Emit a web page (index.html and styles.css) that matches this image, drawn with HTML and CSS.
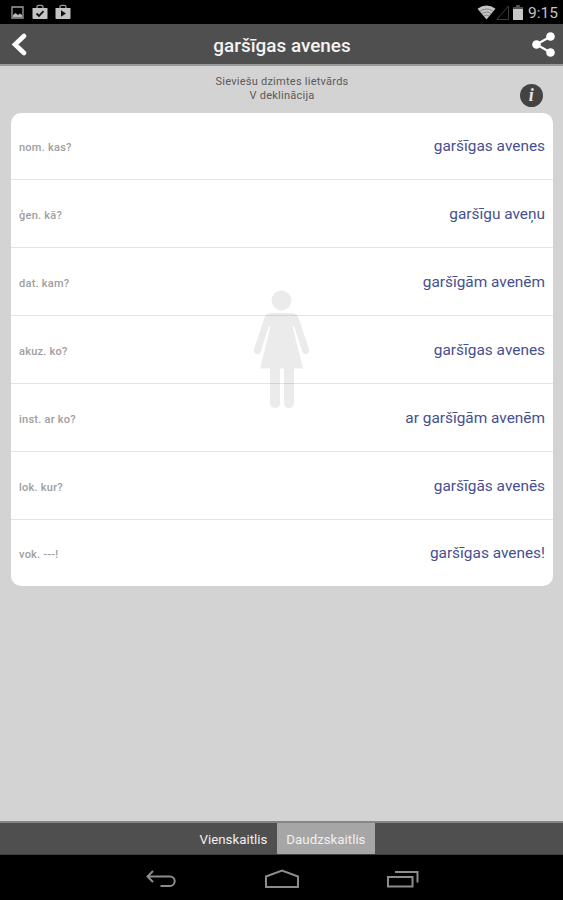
FILE: index.html
```html
<!DOCTYPE html>
<html lang="lv">
<head>
    <meta charset="UTF-8">
    <meta name="viewport" content="width=device-width, initial-scale=1.0">
    <title>garšīgas avenes</title>
    <link rel="stylesheet" href="styles.css">
</head>
<body>
    <!-- Status bar -->
    <div class="status-bar">
        <div class="status-left">
            <svg width="13" height="13" viewBox="0 0 13 13">
                <path d="M1 1h11v11H1z" fill="none" stroke="#a0a0a0" stroke-width="1.3" />
                <path d="M2 11V9l2.500-2L7 9l2-1.500 2 1.500v2z" fill="#b8b8b8" />
            </svg>
            <svg width="16" height="16" viewBox="0 0 16 16">
                <path d="M5 5V3q0-1.600 1.600-1.600h2.800Q11 1.400 11 3v2" fill="none" stroke="#999" stroke-width="1.3" />
                <path d="M.5 4h15v10q0 1-1 1h-13q-1 0-1-1z" fill="#c4c4c4" />
                <path d="M4.500 9.500l2.500 2.400 4.500-4.700" fill="none" stroke="#111" stroke-width="1.8" />
            </svg>
            <svg width="16" height="16" viewBox="0 0 16 16">
                <path d="M5 5V3q0-1.600 1.600-1.600h2.800Q11 1.400 11 3v2" fill="none" stroke="#999" stroke-width="1.3" />
                <path d="M.5 4h15v10q0 1-1 1h-13q-1 0-1-1z" fill="#c4c4c4" />
                <path d="M6 6.300l5 3.200-5 3.200z" fill="#111" />
            </svg>
        </div>
        <div class="status-right">
            <svg class="wifi" width="19" height="15" viewBox="0 0 19 15">
                <path d="M.5 3.800Q9.500-3 18.500 3.800L9.500 14.500z" fill="#c4c4c4" />
                <path d="M2.800 6.300q6.700-4.600 13.400 0M4.700 8.700q4.800-3.300 9.600 0M6.600 11q2.900-2 5.800 0" fill="none" stroke="#444" stroke-width=".5" />
            </svg>
            <svg class="signal" width="13" height="15" viewBox="0 0 13 15">
                <path d="M12.500 1v13.500H.8z" fill="none" stroke="#3c3c3c" />
            </svg>
            <svg class="battery" width="10" height="15" viewBox="0 0 10 15">
                <path d="M3 0h4v2h3v3H0V2h3z" fill="#505050" />
                <path d="M0 4h10v11H0z" fill="#c8c8c8" />
            </svg>
            <span class="clock">9:15</span>
        </div>
    </div>

    <!-- Title bar -->
    <header class="title-bar">
        <a href="#" class="icon-btn">
            <svg width="18" height="24" viewBox="0 0 18 24">
                <path d="M14 4L5 12.500l9 8.500" fill="none" stroke="#fff" stroke-width="4.600" stroke-linecap="round" />
            </svg>
        </a>
        <h1>garšīgas avenes</h1>
        <a href="#" class="icon-btn">
            <svg width="24" height="26" viewBox="0 0 24 26">
                <path d="M18.500 5.500L4.500 13.500l14 8" fill="none" stroke="#fff" stroke-width="2.200" />
                <circle cx="18.500" cy="5.500" r="4.300" fill="#fff" />
                <circle cx="4.500" cy="13.500" r="4.300" fill="#fff" />
                <circle cx="18.500" cy="21.500" r="4.300" fill="#fff" />
            </svg>
        </a>
    </header>

    <!-- Declension table -->
    <main class="content">
        <div class="word-info">
            <p>Sieviešu dzimtes lietvārds<br>V deklinācija</p>
            <a href="#" class="info-btn">i</a>
        </div>
        <div class="card">
            <ul class="case-list">
                <li><span class="case">nom. kas?</span><span class="form">garšīgas avenes</span></li>
                <li><span class="case">ģen. kā?</span><span class="form">garšīgu aveņu</span></li>
                <li><span class="case">dat. kam?</span><span class="form">garšīgām avenēm</span></li>
                <li><span class="case">akuz. ko?</span><span class="form">garšīgas avenes</span></li>
                <li><span class="case">inst. ar ko?</span><span class="form">ar garšīgām avenēm</span></li>
                <li><span class="case">lok. kur?</span><span class="form">garšīgās avenēs</span></li>
                <li><span class="case">vok. ---!</span><span class="form">garšīgas avenes!</span></li>
            </ul>
            <svg class="gender-icon" width="58" height="120" viewBox="0 0 58 120">
                <circle cx="28.500" cy="10.500" r="10" />
                <path d="M18 23H39Q44 23 46 29L56 59Q57 63 53.500 64Q50.500 65 49 61L41 36H39.500L50 78.500H41V113Q41 118 36 118Q31 118 31 113V78.500H27V113Q27 118 22 118Q17 118 17 113V78.500H7L17.500 36H16L8 61Q6.500 65 3 64Q0 63 1 59L11 29Q13 23 18 23Z" />
            </svg>
        </div>
    </main>

    <!-- Number switch -->
    <div class="tabs">
        <a href="#" class="tab">Vienskaitlis</a>
        <a href="#" class="tab active">Daudzskaitlis</a>
    </div>

    <!-- System buttons -->
    <nav class="system-nav">
        <svg width="34" height="20" viewBox="0 0 34 20">
            <path d="M9 2L3.500 7.500 9 13M3.500 7.500h22.500a4.700 4.700 0 0 1 0 9.400H16.500" />
        </svg>
        <svg width="36" height="20" viewBox="0 0 36 20">
            <path d="M2 18V7.500L18 1.500l16 6V18z" />
        </svg>
        <svg width="34" height="20" viewBox="0 0 34 20">
            <path d="M2 8h24.500v9.500H2zM9 3h22.500v10.500" />
        </svg>
    </nav>
</body>
</html>
```
FILE: styles.css
```css
:root {
    --bar-color: #4f4f4f;
    --page-color: #d3d3d3;
    --form-color: #46508f;
    --case-color: #9e9e9e;
}

* {
    margin: 0;
    padding: 0;
    box-sizing: border-box;
}

body {
    font-family: Roboto, 'Liberation Sans', sans-serif;
    background-color: var(--page-color);
    height: 100vh;
    display: flex;
    flex-direction: column;
    overflow: hidden;
}

a {
    color: inherit;
    text-decoration: none;
}

svg {
    display: block;
}

.status-bar {
    height: 24px;
    padding: 0 5px 0 11px;
    background-color: #000;
    display: flex;
    justify-content: space-between;
    align-items: center;
}

.status-left {
    display: flex;
    align-items: center;
    gap: 7px;
}

.status-left svg:first-child {
    margin-right: 1px;
}

.status-right {
    display: flex;
    align-items: center;
}

.battery {
    margin: 0 5px 0 4px;
}

.clock {
    color: #c4c4c4;
    font-size: 15.5px;
    line-height: 24px;
    padding-top: 2px;
}

.title-bar {
    height: 42px;
    padding: 0 7px 0 10px;
    background-color: var(--bar-color);
    border-bottom: 2px solid #999;
    color: #f4f4f4;
    display: flex;
    align-items: center;
}

.title-bar h1 {
    flex-grow: 1;
    padding: 2px 0 0 4px;
    text-align: center;
    font-size: 18.9px;
    font-weight: 500;
}

.content {
    flex-grow: 1;
    padding: 0 10px 0 11px;
}

.word-info {
    height: 47px;
    padding-top: 9px;
    position: relative;
    text-align: center;
    color: #5a5a5a;
    font-size: 11px;
    letter-spacing: 0.25px;
    line-height: 14px;
}

.info-btn {
    position: absolute;
    top: 18px;
    right: 10px;
    width: 23px;
    height: 23px;
    border-radius: 50%;
    background-color: #434343;
    color: #e4e4e4;
    font: italic bold 18px/22px 'Liberation Serif', serif;
}

.card {
    position: relative;
    background-color: #fff;
    border-radius: 10px;
}

.case-list {
    list-style: none;
}

.case-list li {
    height: 68px;
    padding: 0 8px;
    display: flex;
    justify-content: space-between;
    align-items: center;
    border-bottom: 1px solid #e4e4e4;
}

.case-list li:first-child {
    height: 67px;
}

.case-list li:last-child {
    height: 66px;
    border-bottom: none;
}

.case {
    color: var(--case-color);
    font-size: 11px;
    font-weight: 500;
    letter-spacing: 0.25px;
    padding-top: 3px;
}

.form {
    color: var(--form-color);
    font-size: 15.4px;
}

.gender-icon {
    position: absolute;
    top: 177px;
    left: 242px;
    fill: rgba(0, 0, 0, 0.08);
}

.tabs {
    height: 34px;
    padding-left: 3px;
    background-color: var(--bar-color);
    border-top: 2px solid #858585;
    border-bottom: 1px solid #3c3c3c;
    display: flex;
    justify-content: center;
}

.tab {
    padding: 1px 10px 0 9px;
    color: #f0f0f0;
    font-size: 13.3px;
    line-height: 31px;
    white-space: nowrap;
}

.tab.active {
    background-color: #a6a6a6;
}

.system-nav {
    height: 45px;
    padding-top: 3px;
    background-color: #000;
    display: flex;
    justify-content: center;
    align-items: center;
    gap: 86px;
}

.system-nav svg {
    fill: none;
    stroke: #8c8c8c;
    stroke-width: 2;
}
```
